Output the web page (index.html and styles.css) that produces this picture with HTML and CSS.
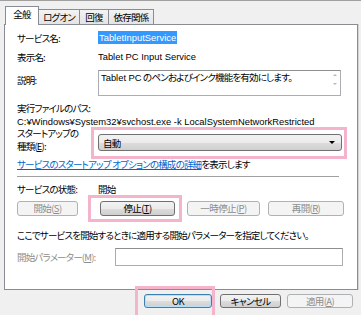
FILE: index.html
```html
<!DOCTYPE html>
<html>
<head>
    <title>Tablet PC Input Service のプロパティ</title>
    <link rel="stylesheet" href="styles.css">
</head>
<body>
    <div class="dialog">
        <div class="tabs">
            <div class="tab active">全般</div>
            <div class="tab t-logon">ログオン</div>
            <div class="tab t-recover">回復</div>
            <div class="tab t-deps">依存関係</div>
        </div>
        <div class="panel">
            <div class="row r-name">
                <span class="label">サービス名:</span>
                <span class="value latin"><span class="selected">TabletInputService</span></span>
            </div>
            <div class="row r-display">
                <span class="label">表示名:</span>
                <span class="value latin">Tablet PC Input Service</span>
            </div>
            <div class="row r-desc">
                <span class="label">説明:</span>
                <div class="textbox">
                    <span class="latin">Tablet PC</span> のペンおよびインク機能を有効にします。
                    <div class="scroll">
                        <span class="arrow up"></span>
                        <span class="arrow down"></span>
                    </div>
                </div>
            </div>
            <div class="r-pathlabel">実行ファイルのパス:</div>
            <div class="r-path latin">C:¥Windows¥System32¥svchost.exe -k LocalSystemNetworkRestricted</div>
            <div class="row r-startup">
                <span class="label two">スタートアップの<br>種類(<u>E</u>):</span>
                <div class="select">
                    <span>自動</span>
                    <span class="caret"></span>
                </div>
                <div class="mark mark-select"></div>
            </div>
            <div class="r-link"><a href="#">サービスのスタートアップ オプションの構成の詳細</a>を表示します</div>
            <div class="sep"></div>
            <div class="row r-state">
                <span class="label">サービスの状態:</span>
                <span class="value">開始</span>
            </div>
            <div class="r-buttons">
                <button class="btn disabled b-start">開始(<u>S</u>)</button>
                <button class="btn b-stop">停止(<u>T</u>)</button>
                <button class="btn disabled b-pause">一時停止(<u>P</u>)</button>
                <button class="btn disabled b-resume">再開(<u>R</u>)</button>
                <div class="mark mark-stop"></div>
            </div>
            <div class="r-hint">ここでサービスを開始するときに適用する開始パラメーターを指定してください。</div>
            <div class="row r-params">
                <span class="label grey">開始パラメーター(<u>M</u>):</span>
                <div class="input"></div>
            </div>
        </div>
        <div class="footer">
            <button class="btn default f-ok">OK</button>
            <button class="btn f-cancel">キャンセル</button>
            <button class="btn disabled f-apply">適用(<u>A</u>)</button>
            <div class="mark mark-ok"></div>
        </div>
    </div>
</body>
</html>
```

FILE: styles.css
```css
body {
    margin: 0;
    background-color: #f0f0f0;
    font-family: "Noto Sans CJK JP", sans-serif;
    font-size: 9.5px;
    font-feature-settings: "palt";
    letter-spacing: -0.8px;
    color: #000;
}

.dialog {
    position: relative;
    width: 361px;
    height: 315px;
    overflow: hidden;
    border-top: 1px solid #a0a0a0;
    box-sizing: border-box;
}

.latin {
    font-family: "Liberation Sans", sans-serif;
    font-size: 9.4px;
    letter-spacing: 0;
}

/* tabs */
.tabs {
    display: flex;
    height: 17px;
    margin-top: 6px;
    padding-left: 5px;
}

.tab {
    height: 15px;
    margin-top: 2px;
    border: 1px solid #898c95;
    border-bottom: none;
    border-left: none;
    background: linear-gradient(#f3f3f3, #e3e3e3);
    line-height: 15px;
    text-align: center;
}

.tab.active {
    width: 32px;
    height: 18px;
    margin-top: -1px;
    margin-bottom: -1px;
    border-left: 1px solid #898c95;
    background: #fff;
    position: relative;
    z-index: 1;
}

.t-logon {
    width: 40px;
}

.t-recover {
    width: 28px;
}

.t-deps {
    width: 44px;
}

/* panel */
.panel {
    position: relative;
    height: 264px;
    margin: 0 3px 0 4px;
    padding: 0 0 0 12px;
    background: #fff;
    border: 1px solid #898c95;
    box-shadow: 1px 0 0 #d4d4d4;
}

.row {
    display: flex;
    align-items: flex-start;
    position: relative;
}

.label {
    width: 81px;
    flex: none;
    line-height: 14px;
}

.value {
    line-height: 14px;
}

.selected {
    background: #3399ff;
    color: #fff;
    padding: 1px 1px;
}

.r-name {
    margin-top: 6px;
}

.r-display {
    margin-top: 5px;
}

.r-desc {
    margin-top: 6px;
}

.r-desc .label {
    margin-top: 3px;
}

.textbox {
    position: relative;
    width: 237px;
    height: 24px;
    padding: 0 2px;
    border: 1px solid #abadb3;
    border-top-color: #8e8f8f;
    line-height: 13px;
}

.scroll {
    position: absolute;
    right: 1px;
    top: 3px;
    width: 8px;
    display: flex;
    flex-direction: column;
    gap: 7px;
    align-items: center;
}

.arrow {
    width: 0;
    height: 0;
    border-left: 2px solid transparent;
    border-right: 2px solid transparent;
}

.arrow.up {
    border-bottom: 2px solid #b8b8b8;
}

.arrow.down {
    border-top: 2px solid #b8b8b8;
}

.r-pathlabel {
    margin-top: 6px;
    line-height: 13px;
}

.r-path {
    line-height: 13px;
}

.r-startup {
    margin-top: -1px;
}

.label.two {
    line-height: 13px;
}

.select {
    display: flex;
    align-items: center;
    justify-content: space-between;
    width: 232px;
    height: 15px;
    margin-top: 7px;
    padding: 0 6px 0 4px;
    border: 1px solid #707070;
    border-radius: 3px;
    background: linear-gradient(#f2f2f2 0%, #ebebeb 50%, #dddddd 51%, #cfcfcf 100%);
}

.caret {
    width: 0;
    height: 0;
    border-left: 3px solid transparent;
    border-right: 3px solid transparent;
    border-top: 3px solid #000;
}

.r-link {
    margin-top: 4px;
    line-height: 14px;
}

.r-link a {
    color: #0066cc;
}

.sep {
    width: 322px;
    height: 1px;
    margin-top: 5px;
    background: #a0a0a0;
}

.r-state {
    margin-top: 5px;
}

.r-buttons {
    display: flex;
    position: relative;
    margin-top: 5px;
}

.btn {
    height: 15px;
    padding: 0;
    border: 1px solid #707070;
    border-radius: 3px;
    background: linear-gradient(#f2f2f2 0%, #ebebeb 50%, #dddddd 51%, #cfcfcf 100%);
    font-family: inherit;
    font-size: 9.5px;
    font-feature-settings: "palt";
    letter-spacing: -0.6px;
    line-height: 13px;
    color: #000;
}

.btn.disabled {
    border-color: #adb2b5;
    background: #f4f4f4;
    color: #8d8d8d;
}

.b-start {
    width: 61px;
}

.b-stop {
    width: 75px;
    margin-left: 22px;
}

.b-pause {
    width: 73px;
    margin-left: 12px;
}

.b-resume {
    width: 76px;
    margin-left: 8px;
}

.r-hint {
    margin-top: 12px;
    line-height: 14px;
}

.r-params {
    margin-top: 6px;
}

.label.grey {
    color: #8d8d8d;
    width: 98px;
    margin-top: 2px;
}

.input {
    width: 226px;
    height: 16px;
    border: 1px solid #abadb3;
    border-top-color: #8e8f8f;
}

/* footer buttons */
.footer {
    position: relative;
    display: flex;
    justify-content: flex-end;
    padding: 4px 8px 0 0;
}

.footer .btn {
    height: 14px;
}

.f-ok {
    width: 68px;
}

.f-cancel {
    width: 61px;
    margin-left: 8px;
}

.f-apply {
    width: 66px;
    margin-left: 6px;
}

.footer .btn.default {
    border-color: #3c7fb1;
    box-shadow: inset 0 0 0 1px #b7e0f8;
}

/* pink highlight marks drawn over the dialog */
.mark {
    position: absolute;
    border: 3px solid #f4b4cc;
    pointer-events: none;
}

.mark-select {
    left: 74px;
    top: 0;
    width: 250px;
    height: 26px;
}

.mark-stop {
    left: 71px;
    top: -6px;
    width: 88px;
    height: 21px;
}

.mark-ok {
    left: 135px;
    top: -4px;
    width: 74px;
    height: 26px;
}
```
